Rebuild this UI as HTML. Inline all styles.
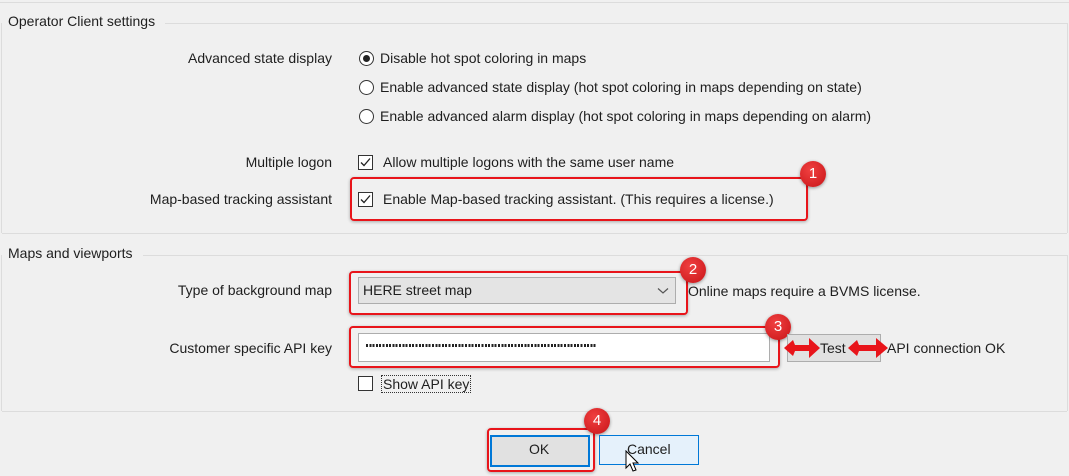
<!DOCTYPE html>
<html><head><meta charset="utf-8"><style>
body{margin:0;width:1069px;height:476px;background:#f0f0f0;position:relative;overflow:hidden;font-family:"Liberation Sans",sans-serif;font-size:14px;color:#1e1e1e}
.a{position:absolute;white-space:nowrap}
.r{text-align:right;width:300px}
.line{position:absolute;height:1px;background:#dcdcdc}
.vl{position:absolute;width:1px;background:#dcdcdc}
.radio{position:absolute;width:13px;height:13px;border:1px solid #333;border-radius:50%;background:#fff}
.cb{position:absolute;width:13px;height:13px;border:1px solid #333;background:#fff}
.red{position:absolute;border:2px solid #e8141a;border-radius:4px;box-shadow:0 1px 3px rgba(0,0,0,.3)}
.badge{position:absolute;width:26px;height:26px;border-radius:50%;background:radial-gradient(circle at 40% 35%,#f04040,#c81418);color:#fff;font-size:15px;text-align:center;line-height:26px;box-shadow:0 1px 3px rgba(0,0,0,.4)}
</style></head><body>
<div class="line" style="left:0;top:2px;width:1069px"></div>
<div class="line" style="left:165px;top:23px;width:902px"></div>
<div class="line" style="left:2px;top:233px;width:1065px"></div>
<div class="vl" style="left:1px;top:23px;height:210px"></div>
<div class="vl" style="left:1067px;top:23px;height:210px"></div>
<div class="a" style="left:8px;top:13px">Operator Client settings</div>

<div class="a r" style="left:32px;top:50px">Advanced state display</div>
<div class="radio" style="left:359px;top:51px"></div><div class="a" style="left:363px;top:55px;width:7px;height:7px;border-radius:50%;background:#222"></div>
<div class="a" style="left:380px;top:50px">Disable hot spot coloring in maps</div>
<div class="radio" style="left:359px;top:80px"></div>
<div class="a" style="left:380px;top:79px">Enable advanced state display (hot spot coloring in maps depending on state)</div>
<div class="radio" style="left:359px;top:109px"></div>
<div class="a" style="left:380px;top:108px">Enable advanced alarm display (hot spot coloring in maps depending on alarm)</div>

<div class="a r" style="left:32px;top:154px">Multiple logon</div>
<div class="cb" style="left:358px;top:155px"><svg width="13" height="13"><path d="M2 6.5 L5 9.5 L11 2.5" stroke="#222" stroke-width="1.3" fill="none"/></svg></div>
<div class="a" style="left:383px;top:154px">Allow multiple logons with the same user name</div>
<div class="a r" style="left:32px;top:191px">Map-based tracking assistant</div>
<div class="cb" style="left:358px;top:192px"><svg width="13" height="13"><path d="M2 6.5 L5 9.5 L11 2.5" stroke="#222" stroke-width="1.3" fill="none"/></svg></div>
<div class="a" style="left:383px;top:191px">Enable Map-based tracking assistant. (This requires a license.)</div>
<div class="red" style="left:350px;top:177px;width:454px;height:40px"></div>
<div class="badge" style="left:800px;top:161px">1</div>

<div class="line" style="left:143px;top:255px;width:924px"></div>
<div class="line" style="left:2px;top:411px;width:1065px"></div>
<div class="vl" style="left:1px;top:255px;height:156px"></div>
<div class="vl" style="left:1067px;top:255px;height:156px"></div>
<div class="a" style="left:8px;top:245px">Maps and viewports</div>

<div class="a r" style="left:32px;top:282px">Type of background map</div>
<div class="a" style="left:358px;top:277px;width:316px;height:25px;background:#e4e4e4;border:1px solid #adadad"></div>
<div class="a" style="left:363px;top:282px">HERE street map</div>
<svg class="a" style="left:657px;top:287px" width="12" height="8"><path d="M1 1.5 L6 6 L11 1.5" stroke="#555" stroke-width="1.2" fill="none"/></svg>
<div class="red" style="left:349px;top:271px;width:335px;height:40px"></div>
<div class="badge" style="left:680px;top:257px">2</div>
<div class="a" style="left:688px;top:283px">Online maps require a BVMS license.</div>

<div class="a r" style="left:32px;top:340px">Customer specific API key</div>
<div class="a" style="left:358px;top:333px;width:410px;height:27px;background:#fff;border:1px solid #adadad"></div>
<div class="a" style="left:366px;top:344px;width:230px;height:3px;background:repeating-linear-gradient(90deg,#222 0 2px,transparent 2px 3.3px)"></div>
<div class="red" style="left:349px;top:326px;width:427px;height:38px"></div>
<div class="badge" style="left:765px;top:314px">3</div>
<div class="a" style="left:787px;top:334px;width:92px;height:26px;background:#e1e1e1;border:1px solid #adadad"></div>
<div class="a" style="left:820px;top:340px">Test</div>
<div class="a" style="left:887px;top:340px">API connection OK</div>
<svg class="a" style="left:780px;top:334px" width="120" height="28">
<path d="M4 14 L13 6 L15 11 L29 11 L29 4 L40 14 L29 24 L29 17 L15 17 L13 22 Z" fill="#e8141a"/>
<path d="M68 14 L77 6 L79 11 L96 11 L96 4 L108 14 L96 24 L96 17 L79 17 L77 22 Z" fill="#e8141a"/>
</svg>
<div class="cb" style="left:358px;top:376px"></div>
<div class="a" style="left:381px;top:375px;border:1px dotted #333;padding:0 1px">Show API key</div>

<div class="a" style="left:490px;top:435px;width:96px;height:28px;background:#e1e1e1;border:2px solid #0078d7"></div>
<div class="a" style="left:529px;top:441px">OK</div>
<div class="red" style="left:487px;top:428px;width:104px;height:40px"></div>
<div class="badge" style="left:584px;top:408px">4</div>
<div class="a" style="left:599px;top:435px;width:98px;height:28px;background:#e5f1fb;border:1px solid #0078d7"></div>
<div class="a" style="left:627px;top:441px">Cancel</div>
<svg class="a" style="left:625px;top:450px" width="16" height="24"><path d="M1 1 L1 18 L5 14 L8 21 L11 20 L8 13 L13 13 Z" fill="#fff" stroke="#000" stroke-width="1"/></svg>
</body></html>
